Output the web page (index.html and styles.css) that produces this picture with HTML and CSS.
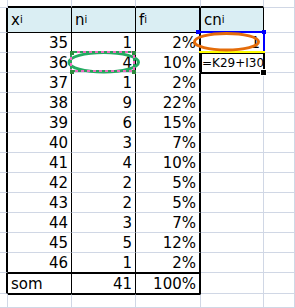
FILE: index.html
```html
<!DOCTYPE html>
<html>
<head>
<meta charset="utf-8">
<link rel="stylesheet" href="styles.css">
</head>
<body>
<div class="sheet">
  <!-- r0 -->
  <div class="c"></div><div class="c tt"></div><div class="c tt"></div><div class="c tt"></div><div class="c tt"></div><div class="c"></div>
  <!-- r1 header -->
  <div class="c lb"></div>
  <div class="c hd vr">x<sub>i</sub></div>
  <div class="c hd vr">n<sub>i</sub></div>
  <div class="c hd fr">f<sub>i</sub></div>
  <div class="c hd cnh">cn<sub>i</sub></div>
  <div class="c"></div>
  <!-- data rows -->
  <div class="c lb"></div><div class="c num vr">35</div><div class="c num vr">1</div><div class="c num fr">2%</div><div class="c num">1</div><div class="c"></div>
  <div class="c lb"></div><div class="c num vr">36</div><div class="c num vr">4</div><div class="c num fr">10%</div><div class="c active">=K29+I30</div><div class="c"></div>
  <div class="c lb"></div><div class="c num vr">37</div><div class="c num vr">1</div><div class="c num fr">2%</div><div class="c"></div><div class="c"></div>
  <div class="c lb"></div><div class="c num vr">38</div><div class="c num vr">9</div><div class="c num fr">22%</div><div class="c"></div><div class="c"></div>
  <div class="c lb"></div><div class="c num vr">39</div><div class="c num vr">6</div><div class="c num fr">15%</div><div class="c"></div><div class="c"></div>
  <div class="c lb"></div><div class="c num vr">40</div><div class="c num vr">3</div><div class="c num fr">7%</div><div class="c"></div><div class="c"></div>
  <div class="c lb"></div><div class="c num vr">41</div><div class="c num vr">4</div><div class="c num fr">10%</div><div class="c"></div><div class="c"></div>
  <div class="c lb"></div><div class="c num vr">42</div><div class="c num vr">2</div><div class="c num fr">5%</div><div class="c"></div><div class="c"></div>
  <div class="c lb"></div><div class="c num vr">43</div><div class="c num vr">2</div><div class="c num fr">5%</div><div class="c"></div><div class="c"></div>
  <div class="c lb"></div><div class="c num vr">44</div><div class="c num vr">3</div><div class="c num fr">7%</div><div class="c"></div><div class="c"></div>
  <div class="c lb"></div><div class="c num vr">45</div><div class="c num vr">5</div><div class="c num fr">12%</div><div class="c"></div><div class="c"></div>
  <div class="c lb"></div><div class="c num vr bb">46</div><div class="c num vr bb">1</div><div class="c num fr bb">2%</div><div class="c"></div><div class="c"></div>
  <!-- som row -->
  <div class="c lb"></div><div class="c vr st">som</div><div class="c num vr st">41</div><div class="c num fr st">100%</div><div class="c"></div><div class="c"></div>
  <!-- r15 -->
  <div class="c"></div><div class="c sb"></div><div class="c sb"></div><div class="c sb"></div><div class="c"></div><div class="c"></div>

  <svg class="marks" width="295" height="308" viewBox="0 0 295 308">
    <ellipse cx="103.75" cy="62.25" rx="34.75" ry="9.75" fill="none" stroke="#25AB62" stroke-width="3"/>
    <rect x="71" y="52" width="63" height="19" fill="none" stroke="#27A35A" stroke-width="2"/>
    <rect x="71" y="52" width="63" height="19" fill="none" stroke="#EE6AC0" stroke-width="2" stroke-dasharray="3 3"/>
    <rect x="70" y="51" width="4" height="4" fill="#2E8B3E"/>
    <rect x="132" y="51" width="4" height="4" fill="#2E8B3E"/>
    <rect x="70" y="70" width="4" height="4" fill="#2E8B3E"/>
    <rect x="132" y="70" width="4" height="4" fill="#2E8B3E"/>
    <rect x="199" y="31" width="66" height="2" fill="#0000FF"/>
    <rect x="263" y="31" width="2" height="21" fill="#0000FF"/>
    <rect x="199" y="51" width="66" height="2" fill="#FFFF00"/>
    <rect x="196" y="30" width="4" height="4" fill="#0000FF"/>
    <rect x="262" y="30" width="4" height="4" fill="#0000FF"/>
    <ellipse cx="226.5" cy="41.75" rx="32" ry="8.3" fill="none" stroke="#E46C0A" stroke-width="3"/>
    <rect x="260" y="69" width="7" height="7" fill="#FFFFFF"/>
    <rect x="261" y="70" width="5" height="5" fill="#000000"/>
  </svg>
</div>
</body>
</html>
```
FILE: styles.css
```css
html, body {
  margin: 0;
  padding: 0;
  background: #fff;
  overflow: hidden;
}

.sheet {
  position: relative;
  width: 295px;
  height: 308px;
  display: grid;
  grid-template-columns: 8px 64px 64px 65px 63px 1fr;
  grid-template-rows: 8px 25px repeat(12, 20px) 21px 1fr;
  font-family: "DejaVu Sans", Verdana, sans-serif;
  font-size: 15px;
  color: #000;
}

.c {
  box-sizing: border-box;
  border-right: 1px solid #D0D7E5;
  border-bottom: 1px solid #D0D7E5;
  display: flex;
  align-items: flex-end;
  justify-content: flex-start;
  padding: 0 3px;
  white-space: nowrap;
  min-width: 0;
}

.num { justify-content: flex-end; }

.tt { border-bottom: 2px solid #000; }

.lb { border-right: 2px solid #000; }

.vr { border-right-color: #000; }

.fr { border-right: 2px solid #000; }

.hd {
  background: #DAEEF3;
  border-bottom-color: #000;
  align-items: center;
}

.cnh { border-right-color: #000; }

.hd sub {
  font-size: 10px;
  vertical-align: -3px;
  line-height: 0;
}

.bb { border-bottom-color: #000; }

.st {
  border-top: 1px solid #000;
  border-bottom-color: #000;
}

.sb { border-top: 1px solid #000; }

.active {
  outline: 2px solid #000;
  outline-offset: -1px;
  font-size: 12px;
  align-items: center;
  padding-left: 1px;
}

.marks {
  position: absolute;
  left: 0;
  top: 0;
  pointer-events: none;
}
```
